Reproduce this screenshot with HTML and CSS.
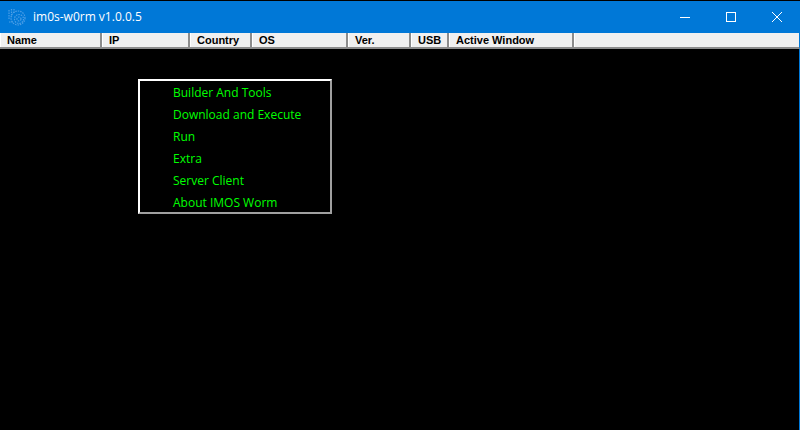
FILE: index.html
```html
<!DOCTYPE html>
<html lang="en">
<head>
<meta charset="utf-8">
<title>im0s-w0rm v1.0.0.5</title>
<link rel="stylesheet" href="styles.css">
</head>
<body>
<div class="window">
  <header class="titlebar">
    <svg class="app-icon" width="18" height="18" viewBox="0 0 18 18" fill="none" stroke="#4d9fe6" stroke-width="1.2" stroke-dasharray="1.5 1">
      <circle cx="11" cy="11" r="2"/>
      <circle cx="11" cy="11" r="4.5"/>
      <circle cx="10" cy="10" r="7"/>
      <path d="M1 2v10M3.500 1v8M6 1v4M1 14h4"/>
    </svg>
    <span class="title">im0s-w0rm v1.0.0.5</span>
    <div class="controls">
      <button class="ctl"><svg width="10" height="10" viewBox="0 0 10 10"><path d="M0 5.500h10" stroke="#fff" fill="none"/></svg></button>
      <button class="ctl"><svg width="10" height="10" viewBox="0 0 10 10"><rect x=".5" y=".5" width="9" height="9" stroke="#fff" fill="none"/></svg></button>
      <button class="ctl"><svg width="10" height="10" viewBox="0 0 10 10"><path d="M0 0l10 10M10 0L0 10" stroke="#fff" fill="none"/></svg></button>
    </div>
  </header>
  <div class="columns">
    <div class="col c-name">Name</div>
    <div class="col c-ip">IP</div>
    <div class="col c-country">Country</div>
    <div class="col c-os">OS</div>
    <div class="col c-ver">Ver.</div>
    <div class="col c-usb">USB</div>
    <div class="col c-active">Active Window</div>
    <div class="col c-rest"></div>
  </div>
  <main class="content">
    <ul class="menu">
      <li>Builder And Tools</li>
      <li>Download and Execute</li>
      <li>Run</li>
      <li>Extra</li>
      <li>Server Client</li>
      <li>About IMOS Worm</li>
    </ul>
  </main>
</div>
</body>
</html>
```
FILE: styles.css
```css
* { box-sizing: border-box; }
html, body { margin: 0; height: 100%; background: #000; overflow: hidden; }
.window {
  width: 800px;
  height: 430px;
  display: flex;
  flex-direction: column;
  background: #000;
}
.titlebar {
  height: 32px;
  margin-top: 1px;
  flex: none;
  display: flex;
  align-items: center;
  background: #0078d7;
  padding-left: 8px;
  color: #fff;
}
.app-icon { flex: none; margin-right: 7px; margin-top: -1px; }
.title {
  font: 12px/16px "Open Sans", "Noto Sans", sans-serif;
  color: #fff;
}
.controls { margin-left: auto; display: flex; height: 100%; }
.ctl {
  width: 46px;
  height: 100%;
  padding: 0;
  border: 0;
  background: none;
  display: flex;
  align-items: center;
  justify-content: center;
}
.columns {
  height: 16px;
  flex: none;
  display: flex;
  background: #f0f0f0;
  border-right: 1px solid #0078d7;
  border-bottom: 2px solid #8c8c8c;
  font: bold 11px/14px "Liberation Sans", Arial, sans-serif;
  color: #000;
}
.col {
  flex: none;
  padding-left: 6px;
  border-left: 1px solid #fff;
  border-right: 2px solid #8c8c8c;
  white-space: nowrap;
}
.c-name { width: 102px; }
.c-ip { width: 88px; }
.c-country { width: 62px; }
.c-os { width: 96px; }
.c-ver { width: 63px; }
.c-usb { width: 38px; }
.c-active { width: 125px; }
.c-rest { flex: 1; border-right: 0; }
.content { flex: 1; position: relative; border-right: 1px solid #0078d7; }
.menu {
  position: absolute;
  left: 138px;
  top: 30px;
  width: 194px;
  height: 135px;
  margin: 0;
  padding: 1px 0 0 33px;
  list-style: none;
  background: #000;
  border: 2px solid;
  border-color: #fff #a0a0a0 #a0a0a0 #fff;
  font: 12px/22px "Open Sans", "Noto Sans", sans-serif;
  color: #00ff00;
}
.menu li { height: 22px; white-space: nowrap; }
```
